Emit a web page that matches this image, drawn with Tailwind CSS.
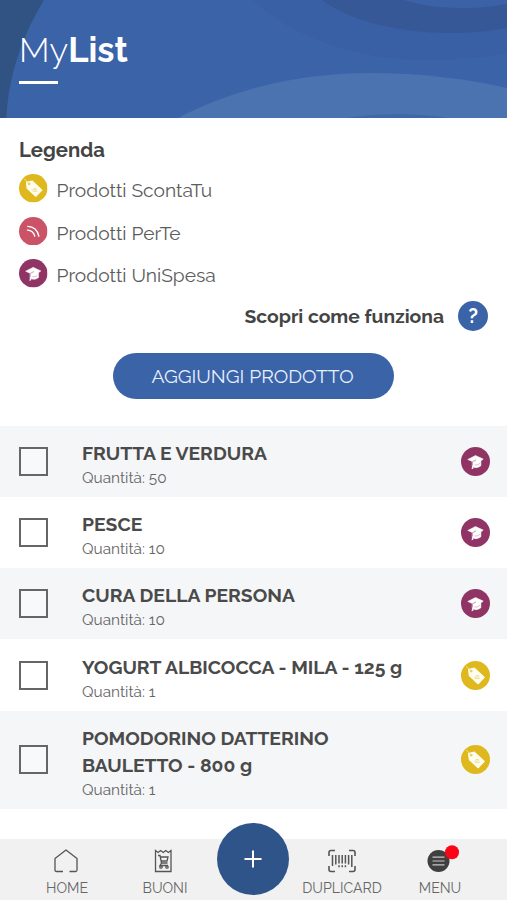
<!DOCTYPE html>
<html lang="it">
<head>
  <meta charset="UTF-8">
  <meta name="viewport" content="width=device-width, initial-scale=1.0">
  <title>MyList</title>
  <script src="https://cdn.jsdelivr.net/npm/@tailwindcss/browser@4"></script>
</head>
<body class="bg-white font-['Raleway','Lato',sans-serif] oldstyle-nums text-[#4a4a4a]">
  <!-- Icon symbols -->
  <svg class="hidden">
    <symbol id="tag" viewBox="0 0 28 28">
      <circle cx="14" cy="14" r="14" fill="#dfb81e" />
      <path d="M7.300 8.200l5.600-1.400 9.600 9-6 6.200-8.500-7.800z" fill="#fffdf0" stroke="#fffdf0" stroke-linejoin="round" />
      <path d="M5 4.800l4.800 4.800" stroke="#f5e6a0" stroke-width=".8" />
      <circle cx="9.900" cy="9.700" r="1.300" fill="#e9cd62" />
      <path d="M12.500 15.500h5.500M13.500 17h4.400M14.200 14h3" stroke="#ead98a" stroke-width=".8" />
    </symbol>
    <symbol id="waves" viewBox="0 0 28 28">
      <circle cx="14" cy="14" r="14" fill="#cb5367" />
      <path d="M8.600 9.200c5.400 .2 9.600 3.800 10.900 9.500M8.300 12.900c3.700 .2 6.200 2.300 7.200 5.900" fill="none" stroke="#fff" stroke-width="1.400" stroke-linecap="round" />
    </symbol>
    <symbol id="cap" viewBox="0 0 28 28">
      <circle cx="14" cy="14" r="14" fill="#8f3464" />
      <path d="M6.500 12L14 8.200l7.500 3.500-2.300 1.700v4.800c-2.400 2.100-6 2.300-8.400 .6v-4.800z" fill="#fff" stroke="#fff" stroke-width=".5" stroke-linejoin="round" />
      <path d="M14.600 12.300l-3.600 2v3.500" fill="none" stroke="#a8608a" stroke-width=".6" />
      <path d="M10.800 18l-.6 3.500 2-.8z" fill="#fff" />
      <path d="M13.200 17.300c2 .4 3.800-.3 5-1.600" fill="none" stroke="#c58bab" stroke-width=".6" />
    </symbol>
  </svg>

  <div class="flex h-[900px] w-[507px] flex-col overflow-hidden">
    <!-- Header -->
    <header class="relative h-[118px] shrink-0 overflow-hidden bg-[#3b63a8]">
      <svg class="absolute inset-0" width="507" height="118" viewBox="0 0 507 118" fill="none">
        <path d="M253 0C290 35 350 59 425 60C455 60 485 57 507 53V0z" fill="#395fa4" />
        <path d="M322 0C350 21 400 33 450 33C472 33 490 31 507 28V0z" fill="#375896" />
        <path d="M404 0C425 7 445 8 465 8C482 8 495 6 507 4V0z" fill="#3b61a6" />
        <path d="M0 0H44C22 36 8 78 6.500 118H0z" fill="#315384" />
        <path d="M178 118C235 88 302 73 370 73C420 73 468 79 507 88V118z" fill="#4b73b0" />
        <path d="M347 118C375 113 420 113 447 118z" fill="#3f68ab" />
      </svg>
      <div class="relative pt-[28px] pl-[19px] text-white">
        <h1 class="h-[44px] text-[34.700px] leading-[44px] whitespace-nowrap"><span class="font-light">My</span><span class="font-bold">List</span></h1>
        <div class="mt-[8.500px] h-[3px] w-[39px] bg-white"></div>
      </div>
    </header>

    <!-- Legend -->
    <section class="h-[307.500px] shrink-0 px-[19px] pt-[18px]">
      <h2 class="text-[20.300px] leading-[28px] font-bold text-[#444]">Legenda</h2>
      <ul class="mt-[10px] text-[19.200px] text-[#5c5c5c]">
        <li class="flex h-[42.500px] items-start gap-[9px]">
          <svg class="size-[28.500px]"><use href="#tag" /></svg>
          <span class="pt-[2px] leading-[28px]">Prodotti ScontaTu</span>
        </li>
        <li class="flex h-[42.500px] items-start gap-[9px]">
          <svg class="size-[28.500px]"><use href="#waves" /></svg>
          <span class="pt-[2px] leading-[28px]">Prodotti PerTe</span>
        </li>
        <li class="flex h-[42.500px] items-start gap-[9px]">
          <svg class="size-[28.500px]"><use href="#cap" /></svg>
          <span class="pt-[2px] leading-[28px]">Prodotti UniSpesa</span>
        </li>
      </ul>
      <div class="-mt-[1px] flex h-[30px] items-center justify-end gap-[14px]">
        <span class="pt-[3px] text-[19.300px] leading-[28px] font-bold text-[#444]">Scopri come funziona</span>
        <span class="flex size-[30px] items-center justify-center rounded-full bg-[#3b63a8] text-[20px] font-bold text-white">?</span>
      </div>
      <button class="mx-auto mt-[22.500px] flex h-[45.500px] w-[281px] items-center justify-center rounded-full bg-[#3b63a8] pt-[3px] pr-[2px] text-[19.300px] text-[#e6f0ff]"><span class="whitespace-nowrap">AGGIUNGI PRODOTTO</span></button>
    </section>

    <!-- Products -->
    <ul class="h-[413.500px] shrink-0">
      <li class="flex h-[71.300px] items-center bg-[#f5f6f8] pr-[17.500px] pl-[18.500px]">
        <span class="size-[29px] border-2 border-[#666] bg-white/30"></span>
        <div class="ml-[34.500px] grow pt-[6px]">
          <h3 class="text-[19.300px] leading-[27px] font-bold whitespace-nowrap">FRUTTA E VERDURA</h3>
          <p class="text-[15.400px] leading-[22px] text-[#666]">Quantità: 50</p>
        </div>
        <svg class="size-[29px] shrink-0"><use href="#cap" /></svg>
      </li>
      <li class="flex h-[71.300px] items-center pr-[17.500px] pl-[18.500px]">
        <span class="size-[29px] border-2 border-[#666] bg-white/30"></span>
        <div class="ml-[34.500px] grow pt-[6px]">
          <h3 class="text-[19.300px] leading-[27px] font-bold whitespace-nowrap">PESCE</h3>
          <p class="text-[15.400px] leading-[22px] text-[#666]">Quantità: 10</p>
        </div>
        <svg class="size-[29px] shrink-0"><use href="#cap" /></svg>
      </li>
      <li class="flex h-[71.300px] items-center bg-[#f5f6f8] pr-[17.500px] pl-[18.500px]">
        <span class="size-[29px] border-2 border-[#666] bg-white/30"></span>
        <div class="ml-[34.500px] grow pt-[6px]">
          <h3 class="text-[19.300px] leading-[27px] font-bold whitespace-nowrap">CURA DELLA PERSONA</h3>
          <p class="text-[15.400px] leading-[22px] text-[#666]">Quantità: 10</p>
        </div>
        <svg class="size-[29px] shrink-0"><use href="#cap" /></svg>
      </li>
      <li class="flex h-[71.300px] items-center pr-[17.500px] pl-[18.500px]">
        <span class="size-[29px] border-2 border-[#666] bg-white/30"></span>
        <div class="ml-[34.500px] grow pt-[6px]">
          <h3 class="text-[19.300px] leading-[27px] font-bold whitespace-nowrap">YOGURT ALBICOCCA - MILA - 125 g</h3>
          <p class="text-[15.400px] leading-[22px] text-[#666]">Quantità: 1</p>
        </div>
        <svg class="size-[29px] shrink-0"><use href="#tag" /></svg>
      </li>
      <li class="flex h-[98px] items-center bg-[#f5f6f8] pr-[17.500px] pl-[18.500px]">
        <span class="size-[29px] border-2 border-[#666] bg-white/30"></span>
        <div class="ml-[34.500px] grow pt-[6px]">
          <h3 class="text-[19.300px] leading-[27px] font-bold whitespace-nowrap">POMODORINO DATTERINO<br>BAULETTO - 800 g</h3>
          <p class="text-[15.400px] leading-[22px] text-[#666]">Quantità: 1</p>
        </div>
        <svg class="size-[29px] shrink-0"><use href="#tag" /></svg>
      </li>
    </ul>

    <!-- Bottom navigation -->
    <nav class="relative flex h-[61px] shrink-0 bg-[#f1f1f1] pl-[18px] text-[14.100px] text-[#666]">
      <a class="flex w-[98px] flex-col items-center pt-[9px]">
        <svg class="-ml-[2px]" width="26" height="26" viewBox="0 0 26 26" fill="none" stroke="#555" stroke-width="1.300"><path d="M10 23.500H3.500Q2 23.500 2 22V10.500L13 2l11 8.500V22q0 1.500-1.500 1.500H16.500" stroke-linejoin="round" /></svg>
        <span class="mt-[4px] leading-[20px]">HOME</span>
      </a>
      <a class="flex w-[98px] flex-col items-center pt-[9px]">
        <svg class="-ml-[4px]" width="26" height="26" viewBox="0 0 26 26" fill="none" stroke="#555" stroke-width="1.300">
          <path d="M5.500 2.500v21h15.500v-21l-2.600 2-2.600-2-2.600 2-2.600-2-2.500 2z" />
          <path d="M8 7.500h2l1.500 7.500h6M10.500 9h7.500l-1 4h-5.500M11.500 15l-1.500 2.500h8" />
          <circle cx="11" cy="19" r="1.200" /><circle cx="17" cy="19" r="1.200" />
        </svg>
        <span class="mt-[4px] leading-[20px]">BUONI</span>
      </a>
      <a class="ml-[79px] flex w-[98px] flex-col items-center pt-[9px]">
        <svg class="-ml-[1px]" width="30" height="26" viewBox="0 0 30 26" fill="none" stroke="#555">
          <path d="M2 8V4.500Q2 2.500 4 2.500h4M22 2.500h4q2 0 2 2V8M2 18v3.500q0 2 2 2h4M22 23.500h4q2 0 2-2V18" stroke-width="1.600" />
          <path d="M5.500 7v11M8.800 7v9.500M12 7v8.500M12 17.300v2M15.200 7v8.500M15.200 17.300v2M18.400 7v8.500M18.400 17.300v2M21.600 7v9.500M24.800 7v12" stroke-width="1.500" />
        </svg>
        <span class="mt-[4px] leading-[20px]">DUPLICARD</span>
      </a>
      <a class="flex w-[98px] flex-col items-center pt-[9px]">
        <svg class="overflow-visible" width="26" height="26" viewBox="0 0 26 26">
          <circle cx="11.500" cy="13" r="11" fill="#3f3f3f" />
          <path d="M5.500 9.200h12M5.500 13h12M5.500 16.800h12" stroke="#c8c8c8" stroke-width="1.200" />
          <circle cx="25" cy="4.300" r="7" fill="#fb0417" />
        </svg>
        <span class="mt-[4px] leading-[20px]">MENU</span>
      </a>
      <!-- Add button -->
      <button class="absolute -top-[16px] left-[217px] flex size-[72px] items-center justify-center rounded-full bg-[#2f5489]">
        <svg width="20" height="20" viewBox="0 0 20 20" stroke="#fff" stroke-width="2"><path d="M10 1.500v17M1.500 10h17" /></svg>
      </button>
    </nav>
  </div>
</body>
</html>
